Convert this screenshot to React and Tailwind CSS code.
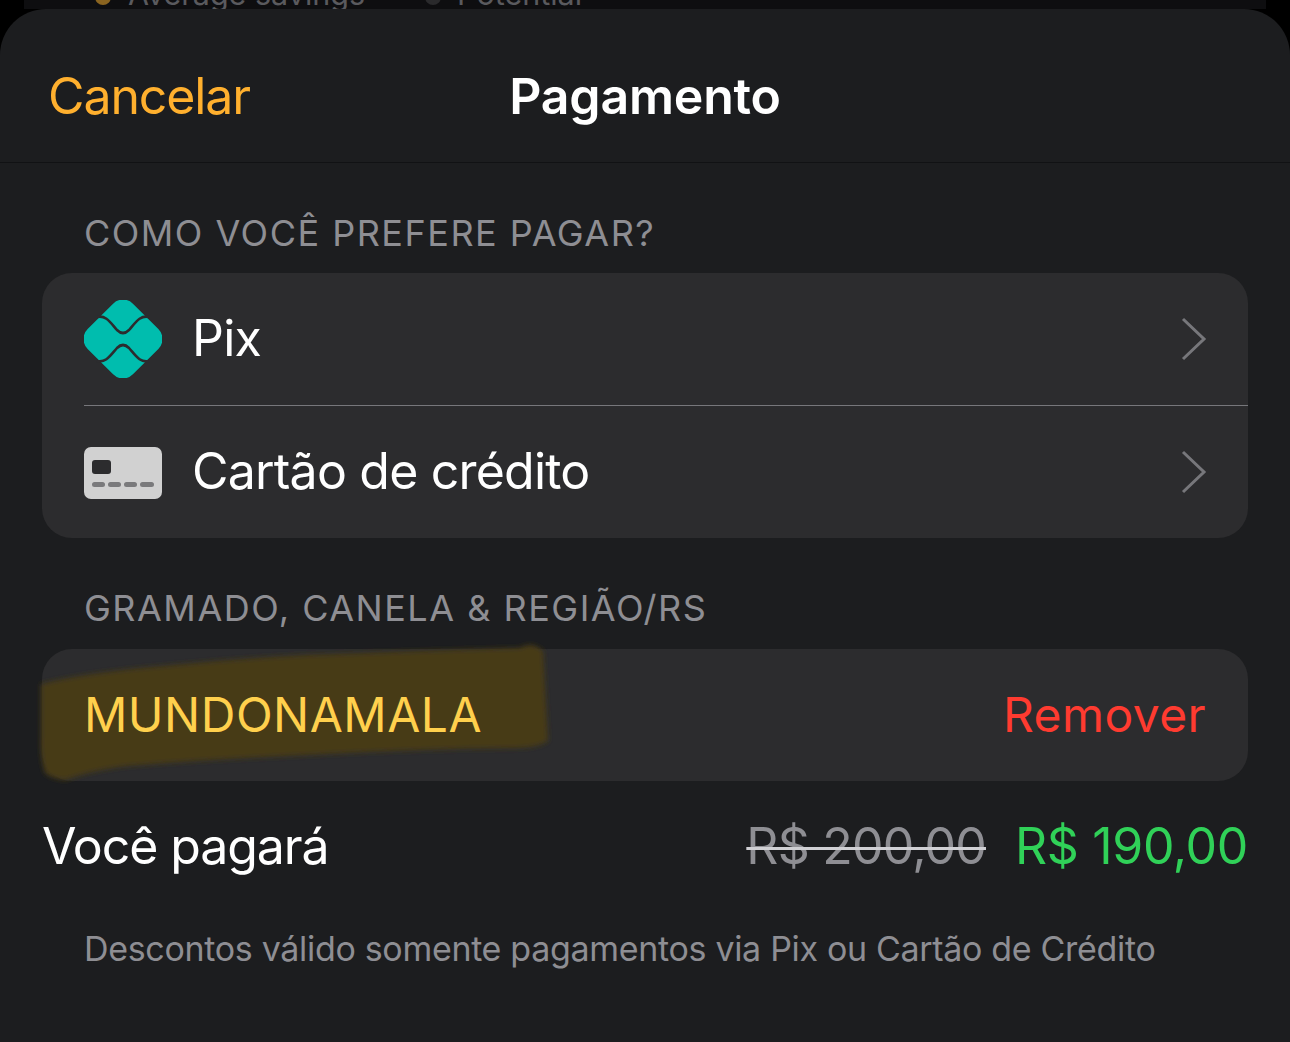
function PixIcon() {
  return (
    <svg width="78" height="78" viewBox="0 0 78 78" className="shrink-0">
      <rect x="7" y="7" width="64" height="64" rx="14" fill="#00bdae" transform="rotate(45 39 39)" />
      <g fill="none" stroke="#2c2c2e" strokeWidth="2.6">
        <path d="M13 17 C22 15 26 22 33 30 Q39 36 45 30 C52 22 56 15 65 17" />
        <path d="M13 61 C22 63 26 56 33 48 Q39 42 45 48 C52 56 56 63 65 61" />
      </g>
    </svg>
  );
}

function CardIcon() {
  return (
    <svg width="78" height="52" viewBox="0 0 78 52" className="shrink-0 translate-y-[1px]">
      <rect width="78" height="52" rx="7" fill="#d1d1d1" />
      <rect x="8" y="13" width="19" height="14" rx="3" fill="#2c2c2e" />
      <rect x="8" y="35" width="13" height="5" rx="2.5" fill="#7a7a7c" />
      <rect x="24" y="35" width="13" height="5" rx="2.5" fill="#7a7a7c" />
      <rect x="40" y="35" width="13" height="5" rx="2.5" fill="#7a7a7c" />
      <rect x="56" y="35" width="14" height="5" rx="2.5" fill="#7a7a7c" />
    </svg>
  );
}

function Chevron() {
  return (
    <svg width="26" height="44" viewBox="0 0 26 44" className="shrink-0">
      <path d="M2 2 L23 22 L2 42" fill="none" stroke="#77777b" strokeWidth="3" />
    </svg>
  );
}

function PaymentRow({ icon, label }) {
  return (
    <div className="h-[132px] flex items-center pr-[41px]">
      {icon}
      <span className="ml-[30px] pb-[2px] flex-1 text-[50px] leading-none tracking-[-0.8px] text-white">{label}</span>
      <Chevron />
    </div>
  );
}

export default function App() {
  return (
    <div className="w-[1290px] h-[1042px] overflow-hidden bg-black font-['Inter',sans-serif]">
      {/* what shows behind the sheet */}
      <div className="h-[9px] mx-[24px] bg-[#0e0e10] overflow-hidden">
        <div className="flex items-center h-[9px] pl-[104px] text-[30.5px] leading-none text-[#5a5a5e] -translate-y-[10px]">
          <span className="w-[16px] h-[16px] rounded-full bg-[#8a6420] translate-y-[2px] -ml-[33px] mr-[17px]"></span>
          <span>Average savings</span>
          <span className="w-[16px] h-[16px] rounded-full bg-[#2a2a2c] translate-y-[2px] ml-[60px] mr-[16px]"></span>
          <span>Potential</span>
        </div>
      </div>

      {/* Sheet */}
      <div className="h-[1033px] bg-[#1c1d1f] rounded-t-[46px]">
        <div className="relative h-[154px] pt-[20px] flex items-center justify-center border-b border-[#111214]">
          <span className="absolute left-[48px] text-[50px] leading-none tracking-[-1.1px] text-[#ffb02e]">Cancelar</span>
          <span className="text-[50px] leading-none tracking-[-0.2px] font-semibold text-white">Pagamento</span>
        </div>

        <div className="px-[42px]">
          <p className="h-[110px] pl-[42px] pt-[50px] text-[36px] leading-[40px] tracking-[1.5px] text-[#8e8e93]">COMO VOCÊ PREFERE PAGAR?</p>
          <div className="rounded-[30px] bg-[#2c2c2e] pl-[42px]">
            <PaymentRow icon={<PixIcon />} label="Pix" />
            <div className="border-t border-[#77777b]">
              <PaymentRow icon={<CardIcon />} label="Cartão de crédito" />
            </div>
          </div>

          <p className="h-[111px] pl-[42px] pt-[50px] text-[36px] leading-[40px] tracking-[1.5px] text-[#8e8e93]">GRAMADO, CANELA &amp; REGIÃO/RS</p>
          <div className="relative h-[132px] rounded-[30px] bg-[#2c2c2e] flex items-center justify-between pl-[42px] pr-[42px]">
            {/* marker highlight */}
            <svg className="absolute -left-[8px] -top-[8px]" width="530" height="148" viewBox="0 0 530 148">
              <defs>
                <filter id="marker-blur" x="-5%" y="-10%" width="110%" height="120%">
                  <feGaussianBlur stdDeviation="2.6" />
                </filter>
              </defs>
              <path
                d="M7 43 Q50 32 129 25 Q200 18 272 14 Q380 10 486 7 Q498 0 509 10 L514 100 Q505 106 486 107 Q380 108 272 114 Q180 118 93 125 Q55 130 32 139 Q18 138 11 132 Q6 116 7 96 Z"
                fill="#473a18"
                filter="url(#marker-blur)"
              />
            </svg>
            <span className="relative text-[48px] leading-none tracking-[0.5px] text-[#ffd04d]">MUNDONAMALA</span>
            <span className="text-[48px] leading-none tracking-[0.4px] text-[#ff3b30]">Remover</span>
          </div>

          <div className="h-[130px] flex items-center justify-between">
            <span className="text-[50px] leading-none tracking-[-1.1px] text-white">Você pagará</span>
            <div className="flex items-center gap-[29px] text-[50px] leading-none">
              <span className="line-through decoration-[3px] tracking-[-0.8px] text-[#8e8e93] decoration-[#d0d0d4]">R$ 200,00</span>
              <span className="tracking-[-0.35px] text-[#30d158]">R$ 190,00</span>
            </div>
          </div>

          <p className="pl-[42px] pt-[18px] text-[34px] leading-[40px] tracking-[-0.32px] whitespace-nowrap text-[#8e8e93]">Descontos válido somente pagamentos via Pix ou Cartão de Crédito</p>
        </div>
      </div>
    </div>
  );
}
